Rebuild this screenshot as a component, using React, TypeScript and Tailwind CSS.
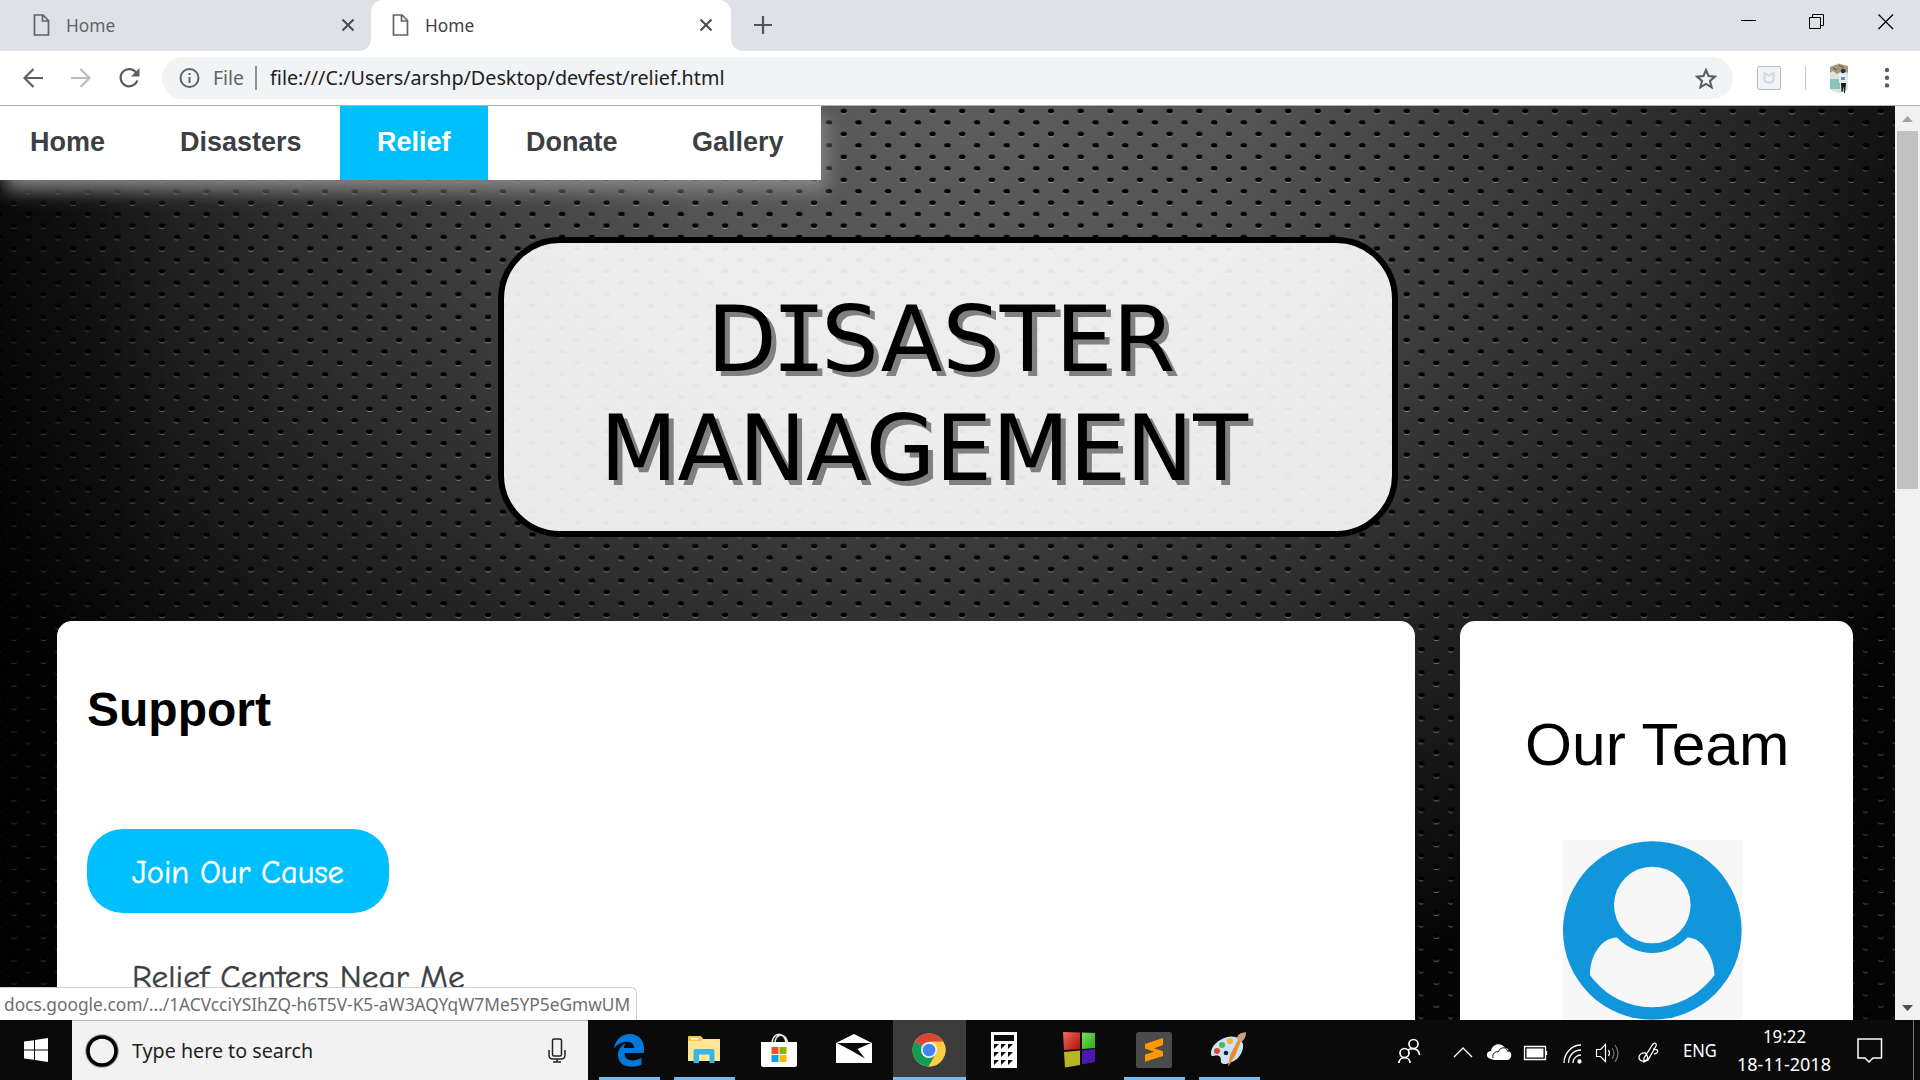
import React, { useLayoutEffect, useRef, useState } from "react";

type FitProps = { w: number; className?: string; children: React.ReactNode };

/** Text squeezed or stretched horizontally to a fixed advance width. */
function Fit({ w, className = "", children }: FitProps) {
  const ref = useRef<HTMLSpanElement>(null);
  const [k, setK] = useState(1);
  useLayoutEffect(() => {
    if (ref.current) setK(w / ref.current.offsetWidth);
  }, [w]);
  return (
    <span className="inline-block shrink-0 whitespace-nowrap" style={{ width: w }}>
      <span ref={ref} className={"inline-block origin-left whitespace-nowrap " + className} style={{ transform: `scaleX(${k})` }}>
        {children}
      </span>
    </span>
  );
}

function PageIcon() {
  return (
    <svg width="18" height="22" viewBox="0 0 18 22" className="shrink-0" fill="none" stroke="#5f6368" strokeWidth="1.7">
      <path d="M1.500 1h8.500l5.500 5.500v14.500h-14zM9.500 1v6h6" />
    </svg>
  );
}

function Cross() {
  return (
    <svg width="14" height="14" viewBox="0 0 14 14" className="shrink-0" stroke="#4a4d51" strokeWidth="2.1">
      <path d="M1.500 1.500l11 11M12.500 1.500l-11 11" />
    </svg>
  );
}

function TabStrip() {
  return (
    <div className="flex h-[51px] shrink-0 bg-[#dee1e6]">
      <div className="flex w-[371px] items-center pr-4 pb-px pl-[33px]">
        <PageIcon />
        <span className="ml-[15px] flex"><Fit w={49} className="text-[18px] text-[#5f6368]">Home</Fit></span>
        <span className="flex-1" />
        <Cross />
      </div>
      <div className="relative flex w-[360px] items-center rounded-t-xl bg-white pr-[18px] pb-px pl-[21px]">
        <svg width="12" height="12" className="absolute bottom-0 -left-3" fill="#fff"><path d="M12 0v12H0A12 12 0 0 0 12 0" /></svg>
        <svg width="12" height="12" className="absolute -right-3 bottom-0" fill="#fff"><path d="M0 0v12h12A12 12 0 0 1 0 0" /></svg>
        <PageIcon />
        <span className="ml-[15px] flex"><Fit w={49} className="text-[18px] text-[#3c4043]">Home</Fit></span>
        <span className="flex-1" />
        <Cross />
      </div>
      <div className="flex flex-1 items-center pb-px pl-[23px]">
        <svg width="18" height="18" stroke="#50545a" strokeWidth="2.2"><path d="M9 0v18M0 9h18" /></svg>
      </div>
      <div className="flex items-start pt-[13px] pr-[26px]">
        <svg width="153" height="18" fill="none" stroke="#000" strokeWidth="1">
          <path d="M0 7.500h15M68.500 4.500h11v11h-11zM71.500 4v-2.500h11v11h-2.500" />
          <path d="M137.500 1.500l14.500 14.500M152 1.500l-14.500 14.500" strokeWidth="1.300" />
        </svg>
      </div>
    </div>
  );
}

function Toolbar() {
  return (
    <div className="flex h-[55px] shrink-0 items-center border-b border-[#b0b1b3] bg-white pr-[30px] pl-[23px]">
      <svg width="118" height="22" viewBox="0 0 118 22" fill="none" strokeWidth="2.200" className="shrink-0">
        <path d="M20 11H1.500M10.500 2l-9 9 9 9" stroke="#5a5e63" />
        <path d="M48 11h18.500M57.500 2l9 9-9 9" stroke="#b9bbbd" />
        <path d="M113.500 6.200A8.600 8.600 0 1 0 114.300 13.500" stroke="#5a5e63" />
        <path d="M116.500 1v8.500H108z" fill="#5a5e63" />
      </svg>
      <div className="ml-[21px] flex h-[42px] w-[1571px] shrink-0 items-center rounded-full bg-[#f1f3f4] pr-4 pl-4">
        <svg width="22" height="22" viewBox="0 0 22 22" fill="none" stroke="#5f6368" strokeWidth="2" className="shrink-0">
          <circle cx="11.500" cy="11" r="9" /><path d="M11.500 10v6M11.500 6v2" />
        </svg>
        <span className="ml-[13px] flex"><Fit w={31} className="text-[20px] text-[#5f6368]">File</Fit></span>
        <span className="mr-[13px] ml-[11px] h-6 w-[1.5px] bg-[#8d9094]" />
        <Fit w={454} className="text-[20px] text-[#202124]">file:///C:/Users/arshp/Desktop/devfest/relief.html</Fit>
        <span className="flex-1" />
        <svg width="22" height="21" viewBox="0 0 22 21" fill="none" stroke="#5a5e63" strokeWidth="2.100">
          <path d="M11 2l2.500 6 6.500.6-5 4.300 1.600 6.400L11 15.900l-5.600 3.400L7 12.900 2 8.600 8.500 8z" />
        </svg>
      </div>
      <svg width="24" height="24" viewBox="0 0 24 24" className="ml-6 shrink-0">
        <rect x=".5" y=".5" width="23" height="23" rx="1.500" fill="#f1f3f4" stroke="#b4bcc3" />
        <path d="M7.500 7l4.500 2.500L16.500 7v8L12 17l-4.500-2z" fill="none" stroke="#d5d9dd" strokeWidth="2" />
      </svg>
      <span className="ml-6 h-6 w-px bg-[#c9cbce]" />
      <svg width="18" height="30" viewBox="0 0 18 30" className="ml-6 shrink-0">
        <path d="M0 3l9-3 9 3v24l-9 3-7-2-2-3z" fill="#d9e6dc" />
        <path d="M0 4l9-3 9 2v7l-6-2-5 3-4-3-3 2z" fill="#a6987c" />
        <path d="M3 5l4 2M9 2l5 3M12 7l4 1" stroke="#5f5443" />
        <path d="M0 16h10v10H0z" fill="#8cc3bd" />
        <path d="M9 11l7 0 2 9h-9z" fill="#e5eef8" /><circle cx="13" cy="8" r="2.200" fill="#35283b" />
        <path d="M11 20h5l-1 10h-1l-.5-7-1 6h-1z" fill="#171525" />
        <path d="M11 14h4v3h-4z" fill="#6e91a7" />
      </svg>
      <span className="flex-1" />
      <svg width="6" height="22" viewBox="0 0 6 22" className="shrink-0" fill="#5a5e63">
        <circle cx="3" cy="3" r="2.200" /><circle cx="3" cy="10.700" r="2.200" /><circle cx="3" cy="18.400" r="2.200" />
      </svg>
    </div>
  );
}

/** Perforated metal sheet drawn behind the whole page. */
function Perforation() {
  return (
    <svg width="1895" height="914" className="absolute inset-0">
      <defs>
        <radialGradient id="sheet" gradientUnits="userSpaceOnUse" cx="0" cy="0" r="1" gradientTransform="translate(960 0) scale(1160 920)">
          <stop offset="0" stopColor="#5d5d5d" />
          <stop offset=".25" stopColor="#545454" />
          <stop offset=".48" stopColor="#3a3a3a" />
          <stop offset=".66" stopColor="#272727" />
          <stop offset=".82" stopColor="#161616" />
          <stop offset="1" stopColor="#050505" />
        </radialGradient>
        <pattern id="holes" patternUnits="userSpaceOnUse" x="1" y="-.7" width="29.635" height="22.904">
          <ellipse cx="12.900" cy="6.600" rx="3.100" ry="2.300" fill="#fff" fillOpacity=".38" />
          <ellipse cx="12.900" cy="5.700" rx="3.200" ry="2.300" fill="#000" />
          <ellipse cx="27.700" cy="18.050" rx="3.100" ry="2.300" fill="#fff" fillOpacity=".38" />
          <ellipse cx="27.700" cy="17.150" rx="3.200" ry="2.300" fill="#000" />
          <ellipse cx="-1.935" cy="17.150" rx="3.200" ry="2.300" fill="#000" />
        </pattern>
        <linearGradient id="fade" x1="0" x2="1">
          <stop offset="0" stopOpacity=".6" /><stop offset=".09" stopOpacity=".1" /><stop offset=".15" stopOpacity="0" />
          <stop offset=".93" stopOpacity="0" /><stop offset="1" stopOpacity=".25" />
        </linearGradient>
      </defs>
      <rect width="1895" height="914" fill="url(#sheet)" />
      <rect width="1895" height="914" fill="url(#holes)" />
      <rect width="1895" height="914" fill="url(#fade)" />
    </svg>
  );
}

const LINKS = [
  { label: "Home", cell: "w-[143px] pl-[30px]" },
  { label: "Disasters", cell: "w-[197px] pl-[37px]" },
  { label: "Relief", cell: "w-[148px] bg-[#00bfff] pl-[37px] text-white" },
  { label: "Donate", cell: "w-[166px] pl-[38px]" },
  { label: "Gallery", cell: "w-[167px] pl-[38px]" },
];

function Site() {
  return (
    <main className="relative h-[914px] w-[1895px] shrink-0 overflow-hidden bg-black font-['Liberation_Sans',Arial,sans-serif]">
      <Perforation />
      <div className="relative">
        <nav className="flex h-[74px] w-[821px] bg-white text-[27px] font-bold text-[#3c4043] shadow-[5px_10px_18px_#888888]">
          {LINKS.map((l) => (
            <a key={l.label} className={"h-[74px] leading-[73px] whitespace-nowrap " + l.cell}>{l.label}</a>
          ))}
        </nav>
        <header className="mt-[57px] ml-[498px] h-[300px] w-[900px] rounded-[62px] border-[6px] border-black bg-white/90 pt-[42px] font-['DejaVu_Sans',Verdana,sans-serif] text-[90px] leading-[109px] text-black [text-shadow:5px_5px_#808080]">
          <div className="pl-[203px]">
            <Fit w={468}>D<span className="-mx-[5px] font-['DejaVu_Sans_Mono',monospace]">I</span>SASTER</Fit>
          </div>
          <div className="pl-[96px]"><Fit w={648}>MANAGEMENT</Fit></div>
        </header>
        <div className="mt-[84px] flex pl-[57px] text-black">
          <section className="h-[420px] w-[1358px] rounded-t-[15px] bg-white pt-[61px] pl-[30px]">
            <h2 className="text-[48px] leading-[56px] font-bold">Support</h2>
            <div className="mt-[91px] flex h-[84px] w-[302px] items-center rounded-[36px] bg-[#00bfff] pt-[3px] pl-[45px] text-[33px] text-white font-['Comic_Sans_MS','Comic_Neue',Lato,sans-serif] [-webkit-text-stroke:0.5px_#fff]">
              <Fit w={212}>Join Our Cause</Fit>
            </div>
            <div className="mt-[43px] pl-[45px] text-[33px] leading-[42px] text-[#3c4043] font-['Comic_Sans_MS','Comic_Neue',Lato,sans-serif] [-webkit-text-stroke:0.4px_#3c4043]">
              <Fit w={333}>Relief Centers Near Me</Fit>
            </div>
          </section>
          <aside className="ml-[45px] h-[420px] w-[393px] rounded-t-[15px] bg-white pt-[89px]">
            <h2 className="pl-[65px] text-[60px] leading-[69px] whitespace-nowrap"><Fit w={264}>Our Team</Fit></h2>
            <svg width="180" height="180" viewBox="0 0 180 180" className="mt-[61px] ml-[103px] bg-[#f7f7f7]">
              <circle cx="89.300" cy="90.500" r="89.300" fill="#1296db" />
              <circle cx="89.300" cy="65" r="38.300" fill="#f7f7f7" />
              <path d="M54 97.500C37 98 27 117 27 135C58 178 120 178 151.500 135C151 117 140 98 124.500 97.500C105 118 73 118 54 97.500Z" fill="#f7f7f7" />
            </svg>
          </aside>
        </div>
      </div>
      <div className="absolute bottom-0 left-0 flex h-[33px] w-[637px] items-center rounded-tr-md border-t border-r border-[#d0d0d0] bg-white pl-1 font-['Noto_Sans',sans-serif] text-[18px] text-[#6b6f74]">
        <Fit w={626}>docs.google.com/.../1ACVcciYSIhZQ-h6T5V-K5-aW3AQYqW7Me5YP5eGmwUM</Fit>
      </div>
    </main>
  );
}

function Scrollbar() {
  return (
    <div className="flex w-[25px] flex-col items-center bg-[#f1f1f1]">
      <svg width="25" height="25" fill="#a3a3a3"><path d="M7 16l5.500-6 5.500 6z" /></svg>
      <div className="h-[358px] w-[21px] bg-[#c1c1c1]" />
      <span className="flex-1" />
      <svg width="25" height="25" fill="#505050"><path d="M7 10l5.500 6 5.500-6z" /></svg>
    </div>
  );
}

const glyph: Record<string, React.ReactNode> = {
  edge: (
    <svg width="30" height="33" viewBox="0 0 30 33" fill="#0078d7">
      <path d="M0 14.500C1.500 5 8 0 15.500 0 25 0 30 7 30 14.500V19H10.500c0 8.500 10 9 17 5v6.500C18 35 4 33 4 21c0-5.500 3-9.500 8-12-1.500 1.500-2 3.500-2.200 5H20C20.500 6 7 5 0 14.500z" />
    </svg>
  ),
  explorer: (
    <svg width="32" height="28" viewBox="0 0 32 28">
      <path d="M0 1h13l2 2h17v22H0z" fill="#ffe694" /><path d="M0 1q0-1 1-1h12l2 3-2 2H0z" fill="#ffc933" /><path d="M3 2h7v1.500H3z" fill="#fff" />
      <path d="M5.500 27V15q0-2 2-2h17q2 0 2 2v12h-5v-8.500h-10.500V27z" fill="#3bb5e8" />
    </svg>
  ),
  store: (
    <svg width="36" height="35" viewBox="0 0 36 35">
      <path d="M11 11C11-2 25-2 25 11M14 11C14 0 24-1 27 10" fill="none" stroke="#e8e8e8" strokeWidth="1.500" />
      <path d="M0 9h36v23q0 2-2 2H2q-2 0-2-2z" fill="#fff" />
      <path d="M10.500 14h7v7h-7z" fill="#f25022" /><path d="M18.500 14h7v7h-7z" fill="#7fba00" /><path d="M10.500 22h7v7h-7z" fill="#00a4ef" /><path d="M18.500 22h7v7h-7z" fill="#ffb900" />
    </svg>
  ),
  mail: (
    <svg width="36" height="32" viewBox="0 0 36 32"><path d="M0 9L18 0l18 9v20H0z" fill="#fff" /><path d="M1 9h34L21.500 15l7.500 9.500L16 17z" fill="#0a0a0a" /></svg>
  ),
  chrome: (
    <svg width="34" height="34" viewBox="0 0 34 34">
      <circle cx="17" cy="17" r="16.500" fill="#ffcd40" />
      <path d="M17 17L2.700 8.800A16.500 16.500 0 0 1 31.300 8.800H17z" fill="#db4437" />
      <path d="M17 17L2.700 8.800A16.500 16.500 0 0 0 16.500 33.500L24 21z" fill="#0f9d58" />
      <path d="M17 8.800h14.300A16.500 16.500 0 0 1 16.500 33.500L24 21z" fill="#ffcd40" />
      <circle cx="17" cy="17" r="8" fill="#f1f1f1" /><circle cx="17" cy="17" r="6.300" fill="#4285f4" />
    </svg>
  ),
  calc: (
    <svg width="26" height="36" viewBox="0 0 26 36">
      <path d="M0 0h26v36H0z" fill="#fff" />
      <path d="M3 3h20v6H3zM3 12h5l-5 5zM10 12h5l-5 5zM17 12h5l-5 5zM3 20h5l-5 5zM10 20h5l-5 5zM17 20h5l-5 5zM3 28h5l-5 5zM10 28h5l-5 5zM17 28h5l-5 5z" fill="#0a0a0a" />
    </svg>
  ),
  blocks: (
    <svg width="32" height="36" viewBox="0 0 32 36">
      <defs>
        <linearGradient id="red" x2="1" y2="1"><stop stopColor="#ef6a5c" /><stop offset="1" stopColor="#b30f08" /></linearGradient>
        <linearGradient id="lime" x2="1" y2="1"><stop stopColor="#76dd55" /><stop offset="1" stopColor="#2fa81c" /></linearGradient>
      </defs>
      <path d="M0 0l17 .5V17L1 18z" fill="url(#red)" /><path d="M19 .5L32 1v15l-13 1z" fill="url(#lime)" />
      <path d="M1 20l16-1.500V33L2 35.500z" fill="#b9b52b" /><path d="M19 18.500l13-1.500v13l-13 2.500z" fill="#4a1ab0" />
    </svg>
  ),
  sublime: (
    <svg width="36" height="36" viewBox="0 0 36 36">
      <rect width="36" height="36" rx="2.500" fill="#4b4b4b" />
      <path d="M27 6v7l-9 3.200 9 3V24L9 29.800v-7l9-3-9-3.300V12z" fill="#ff9800" />
    </svg>
  ),
  paint: (
    <svg width="36" height="36" viewBox="0 0 36 36">
      <path d="M11 7C21 1 34 6 32 16c-1 6-5 11-9 13-5 2-6 3-9 3-7 0-2-6-6-8C4 22 0 27 0 21 0 15 5 10 11 7z" fill="#c9e4f6" />
      <circle cx="11" cy="13" r="3" fill="#50b848" /><circle cx="19" cy="9" r="3" fill="#f9b233" /><circle cx="6" cy="19" r="3" fill="#e8432e" /><circle cx="15" cy="21" r="2.300" fill="#14202b" />
      <path d="M17 35l2-12 8-15 3 1-6 15z" fill="#ee8a2c" /><path d="M26 7c0-5 4-6 9-7 0 5-2 9-6 10z" fill="#c9a27c" />
    </svg>
  ),
};

const APPS = [
  { id: "edge", open: true }, { id: "explorer", open: true }, { id: "store" }, { id: "mail" },
  { id: "chrome", open: true, active: true }, { id: "calc" }, { id: "blocks" },
  { id: "sublime", open: true }, { id: "paint", open: true },
];

function Tray() {
  return (
    <div className="flex h-[60px] items-center text-white">
      <svg width="300" height="60" viewBox="1390 0 300 60" fill="none" stroke="#fff" strokeWidth="1.700" className="shrink-0">
        <circle cx="1412.500" cy="24" r="4.500" /><circle cx="1403.500" cy="33" r="4.500" />
        <path d="M1398 43c0-7 11-7 11 0M1407 30c5-3 11-1 11.500 5" />
        <path d="M1453 37l9-9 9 9" strokeWidth="1.400" />
        <path d="M1490 39c-6-1-5-8 0-8 1-8 11-9 14-3 3 0 4 2 3 3 5 1 4 9-1 9h-13z" fill="#fff" stroke="none" />
        <path d="M1492 38c-1-5 3-7 5-6 3-7 10-4 10 0" stroke="#0a0a0a" strokeWidth="1" />
        <path d="M1523.500 26.500h21v13h-21zM1545.500 31v4" strokeWidth="1.300" /><path d="M1525.500 28.500h17v9h-17z" fill="#fff" stroke="none" />
        <g strokeWidth="1.300"><path d="M1563 43c0-10 8-18 17-18M1567.500 43c0-8 6-13 12.500-13M1572 43c0-5 4-8 8-8" /><circle cx="1578.500" cy="41.500" r="1.500" fill="#fff" /></g>
        <path d="M1595.500 29.500h4l5-5v17l-5-5h-4z" strokeWidth="1.200" /><path d="M1607.500 30q2 3 0 6" strokeWidth="1.200" />
        <path d="M1611 28q4 5 0 11M1614 25q6 8 0 17" stroke="#777" strokeWidth="1.200" />
        <path d="M1643 38l9-14c2-2 4 0 3 2l-8 14-4 2zM1645 33c-9-1-9 9-2 8 6-1 3-5 2-8M1652 29c6 0 6 4 1 5" strokeWidth="1.300" />
      </svg>
      <span className="-ml-[8px] flex"><Fit w={34} className="text-[18px]">ENG</Fit></span>
      <div className="ml-[20px] flex w-[94px] flex-col items-center text-[18px] leading-7">
        <Fit w={43}>19:22</Fit>
        <Fit w={94}>18-11-2018</Fit>
      </div>
      <svg width="26" height="27" fill="none" stroke="#fff" strokeWidth="1.500" className="ml-[26px]">
        <path d="M1 2h23.500v19H16l-4 4-4-4H1z" />
      </svg>
      <span className="mr-[6px] ml-[30px] h-[60px] w-px shrink-0 bg-[#777]" />
    </div>
  );
}

function Taskbar() {
  return (
    <footer className="flex h-[60px] shrink-0 bg-[#0a0a0a]">
      <div className="flex w-[72px] items-center justify-center">
        <svg width="24" height="24" viewBox="0 0 24 24" fill="#fff">
          <path d="M0 3.500l10-1.300v9.300H0zM11 2l13-2v11.500H11zM0 12.500h10v9.300L0 20.500zM11 12.500h13V24l-13-2z" />
        </svg>
      </div>
      <div className="flex w-[516px] items-center border-t border-[#b5b5b5] bg-[#f2f2f2] pr-[22px] pl-[13px]">
        <svg width="34" height="34" fill="none"><circle cx="17" cy="17" r="15.300" stroke="#999" strokeWidth="3" /><circle cx="17" cy="17" r="14" stroke="#000" strokeWidth="3.500" /></svg>
        <span className="ml-[13px] flex"><Fit w={181} className="text-[20px] text-[#222]">Type here to search</Fit></span>
        <span className="flex-1" />
        <svg width="18" height="25" viewBox="0 0 18 25" fill="none" stroke="#222" strokeWidth="1.500">
          <rect x="4.500" y="1" width="9" height="17" rx="1.500" /><path d="M1 12v5q0 4 4 4h8q4 0 4-4v-5M9 21v3M5 24h8" />
        </svg>
      </div>
      <div className="flex pl-[4px]">
        {APPS.map((a) => (
          <div key={a.id} className={"relative mx-px flex h-[60px] w-[73px] items-center justify-center pr-[2px] " + (a.active ? "bg-[#3c3c3c]" : "")}>
            {glyph[a.id]}
            {a.open && <span className={"absolute bottom-0 h-[3px] bg-[#76b9ed] " + (a.active ? "inset-x-0" : "inset-x-[6px]")} />}
          </div>
        ))}
      </div>
      <span className="flex-1" />
      <Tray />
    </footer>
  );
}

export default function App() {
  return (
    <div className="flex h-[1080px] w-[1920px] flex-col overflow-hidden font-['Noto_Sans',sans-serif]">
      <TabStrip />
      <Toolbar />
      <div className="flex h-[914px] shrink-0">
        <Site />
        <Scrollbar />
      </div>
      <Taskbar />
    </div>
  );
}
